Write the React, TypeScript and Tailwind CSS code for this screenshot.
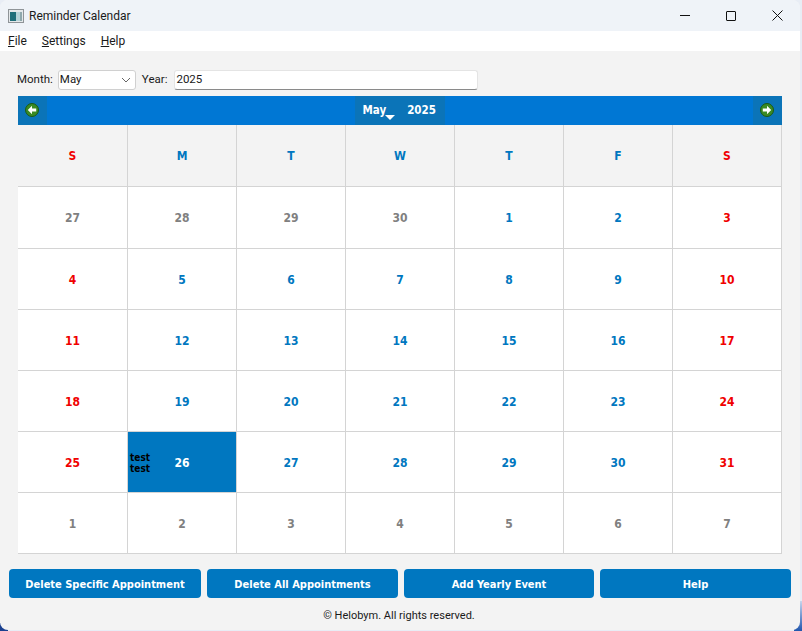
import React from "react";

const weeks: number[][] = [
  [27, 28, 29, 30, 1, 2, 3],
  [4, 5, 6, 7, 8, 9, 10],
  [11, 12, 13, 14, 15, 16, 17],
  [18, 19, 20, 21, 22, 23, 24],
  [25, 26, 27, 28, 29, 30, 31],
  [1, 2, 3, 4, 5, 6, 7],
];
const heads = ["S", "M", "T", "W", "T", "F", "S"];

function Arrow({ dir }: { dir: "left" | "right" }) {
  return (
    <svg width="14" height="14" viewBox="0 0 14 14">
      <circle cx="7" cy="7" r="6.5" fill="#3a8a24" />
      <circle cx="7" cy="7" r="6.5" fill="none" stroke="#1c5a14" strokeWidth="1" />
      <path
        d={dir === "left" ? "M7 2.8 L2.8 7 L7 11.2 L7 8.6 L11.2 8.6 L11.2 5.4 L7 5.4 Z" : "M7 2.8 L11.2 7 L7 11.2 L7 8.6 L2.8 8.6 L2.8 5.4 L7 5.4 Z"}
        fill="#ffffff"
      />
    </svg>
  );
}

function Btn({ label, w }: { label: string; w: string }) {
  return (
    <button className={`${w} h-[29px] pt-[3px] shrink-0 rounded-[4px] bg-[#0077c0] text-white font-bold text-[11px] font-['DejaVu_Sans_Condensed','DejaVu_Sans',sans-serif]`}>
      {label}
    </button>
  );
}

export default function App() {
  return (
    <div className="relative w-[802px] h-[631px] bg-[#e8edf5] overflow-hidden">
      <div className="absolute left-0 bottom-0 w-[8px] h-[8px] bg-[#1a3f8f]" />
      <div className="absolute right-0 bottom-0 w-[8px] h-[30px] bg-gradient-to-b from-[#c8d6ec] to-[#1f55ad]" />
      <div className="relative w-[800px] h-[630px] rounded-[8px] overflow-hidden bg-[#f3f3f3] flex flex-col font-['Roboto',sans-serif] text-[#1a1a1a]">
        <div className="h-[31px] shrink-0 bg-[#eff3f8] flex items-center pl-[8px]">
          <svg width="16" height="14" viewBox="0 0 16 14" className="shrink-0">
            <rect x="0.5" y="0.5" width="15" height="13" fill="#e4e8ea" stroke="#8f9498" />
            <rect x="2" y="3" width="6" height="9" fill="#1f6f7a" />
            <rect x="8" y="3" width="4" height="9" fill="#b5d3d8" />
            <rect x="12" y="3" width="2" height="9" fill="#8fa8ac" />
          </svg>
          <span className="ml-[5px] text-[12px]">Reminder Calendar</span>
          <div className="ml-auto flex items-center">
            <div className="w-[46px] h-[31px] flex items-center justify-center">
              <div className="w-[10px] h-px bg-[#111]" />
            </div>
            <div className="w-[46px] h-[31px] flex items-center justify-center">
              <div className="w-[10px] h-[10px] border border-[#111] rounded-[1px]" />
            </div>
            <div className="w-[46px] h-[31px] flex items-center justify-center">
              <svg width="11" height="11" viewBox="0 0 11 11">
                <path d="M0.5 0.5 L10.5 10.5 M10.5 0.5 L0.5 10.5" stroke="#111" strokeWidth="1" fill="none" />
              </svg>
            </div>
          </div>
        </div>

        <div className="h-[20px] shrink-0 bg-white flex items-center pl-[8px] gap-[15px] text-[12px]">
          <span><span className="underline">F</span>ile</span>
          <span><span className="underline">S</span>ettings</span>
          <span><span className="underline">H</span>elp</span>
        </div>

        <div className="flex flex-col flex-1 pt-[19px]">
          <div className="h-[20px] pl-[17px] flex items-center text-[11.5px] shrink-0">
            <span>Month:</span>
            <div className="ml-[5px] w-[78px] h-[20px] shrink-0 bg-white border border-[#d0d0d0] rounded-[3px] flex items-center justify-between pl-[1px] pr-[4px]">
              <span>May</span>
              <svg width="10" height="6" viewBox="0 0 10 6">
                <path d="M1 1 L5 5 L9 1" fill="none" stroke="#666" strokeWidth="1" />
              </svg>
            </div>
            <span className="ml-[6px]">Year:</span>
            <div className="ml-[7px] w-[304px] h-[20px] shrink-0 bg-white border border-[#e4e4e4] border-b-[#8a8a8a] rounded-[3px] flex items-center pl-[1px]">
              2025
            </div>
          </div>

          <div className="mt-[6px] ml-[18px] w-[764px] font-['DejaVu_Sans_Condensed','DejaVu_Sans',sans-serif] font-bold text-[12px]">
            <div className="h-[29px] bg-[#0077d4] flex items-center justify-between text-white">
              <div className="w-[29px] h-[29px] pr-[2px] pb-[2px] bg-[#0b74b8] flex items-center justify-center"><Arrow dir="left" /></div>
              <div className="h-[29px] w-[90px] ml-[-1px] pt-[1px] text-[11.5px] bg-[#0b74b8] flex items-center relative">
                <span className="ml-[8px]">May</span>
                <span className="ml-[21px]">2025</span>
                <svg width="10" height="5" viewBox="0 0 10 5" className="absolute left-[30px] top-[19px]">
                  <path d="M0 0 H10 L5 5 Z" fill="#fff" />
                </svg>
              </div>
              <div className="w-[29px] h-[29px] pr-[1px] pb-[2px] bg-[#0b74b8] flex items-center justify-center"><Arrow dir="right" /></div>
            </div>

            <div className="grid grid-cols-[110px_repeat(6,109px)] w-[764px]">
              {heads.map((h, i) => (
                <div
                  key={i}
                  className={`h-[62px] pt-[1px] bg-[#f3f3f3] border-r border-b border-[#d4d4d4] flex items-center justify-center ${i === 0 || i === 6 ? "text-[#f00000]" : "text-[#0077c0]"}`}
                >
                  {h}
                </div>
              ))}
              {weeks.map((week, r) =>
                week.map((d, c) => {
                  const muted = (r === 0 && d > 20) || r === 5;
                  const selected = r === 4 && c === 1;
                  const color = selected ? "text-white" : muted ? "text-[#808080]" : c === 0 || c === 6 ? "text-[#f00000]" : "text-[#0077c0]";
                  return (
                    <div
                      key={`${r}-${c}`}
                      className={`${r === 0 ? "h-[62px]" : "h-[61px]"} pt-[1px] border-r border-b border-[#d4d4d4] flex items-center justify-center relative ${selected ? "bg-[#0077c0]" : "bg-white"} ${color}`}
                    >
                      {selected && (
                        <div className="absolute left-[2px] top-[20px] text-black font-bold text-[10px] leading-[11px]">
                          test<br />test
                        </div>
                      )}
                      {d}
                    </div>
                  );
                })
              )}
            </div>
          </div>

          <div className="mt-[15px] ml-[9px] flex gap-[6px]">
            <Btn label="Delete Specific Appointment" w="w-[192px]" />
            <Btn label="Delete All Appointments" w="w-[191px]" />
            <Btn label="Add Yearly Event" w="w-[190px]" />
            <Btn label="Help" w="w-[191px]" />
          </div>
          <div className="mt-[10px] text-center text-[11px] leading-[16px] pr-[2px]">© Helobym. All rights reserved.</div>
        </div>
      </div>
    </div>
  );
}
